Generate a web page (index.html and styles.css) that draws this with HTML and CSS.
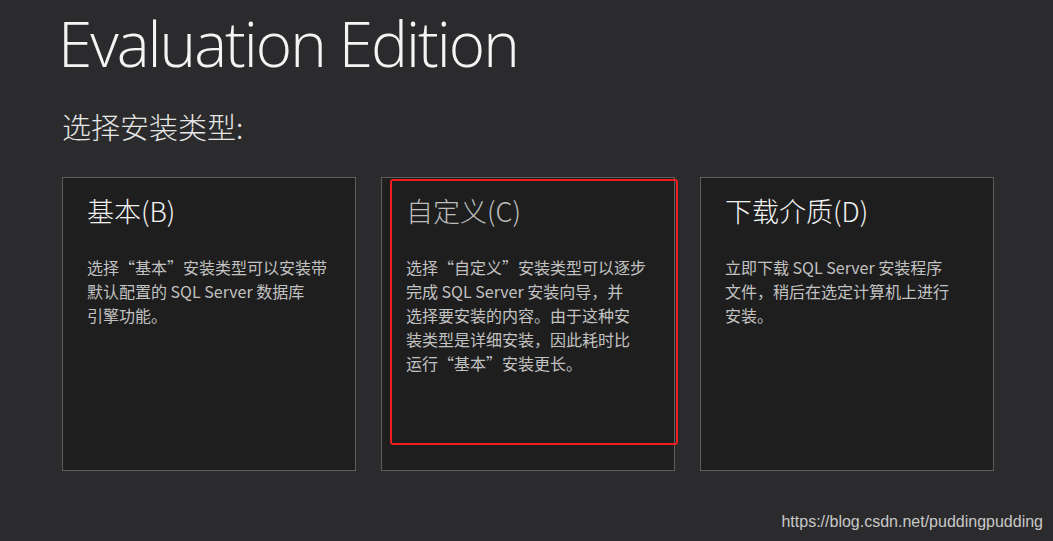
FILE: index.html
```html
<!DOCTYPE html>
<html lang="zh-CN">
<head>
    <meta charset="UTF-8">
    <meta name="viewport" content="width=device-width, initial-scale=1.0">
    <title>Evaluation Edition</title>
    <link rel="stylesheet" href="styles.css">
</head>
<body>
    <main class="page">
        <h1 class="edition">Evaluation Edition</h1>
        <h2 class="prompt">选择安装类型:</h2>

        <div class="cards">
            <div class="card">
                <h3 class="card-title">基本(B)</h3>
                <p class="card-text">选择“基本”安装类型可以安装带<br>默认配置的 SQL Server 数据库<br>引擎功能。</p>
            </div>
            <div class="card card-selected">
                <h3 class="card-title dim">自定义(C)</h3>
                <p class="card-text">选择“自定义”安装类型可以逐步<br>完成 SQL Server 安装向导，并<br>选择要安装的内容。由于这种安<br>装类型是详细安装，因此耗时比<br>运行“基本”安装更长。</p>
                <div class="mark"></div>
            </div>
            <div class="card">
                <h3 class="card-title">下载介质(D)</h3>
                <p class="card-text">立即下载 SQL Server 安装程序<br>文件，稍后在选定计算机上进行<br>安装。</p>
            </div>
        </div>
    </main>
    <div class="watermark">https://blog.csdn.net/puddingpudding</div>
</body>
</html>
```

FILE: styles.css
```css
html, body {
    margin: 0;
    height: 100%;
}

body {
    background-color: #2b2b2d;
    color: #f2f2f2;
    font-family: "Open Sans", "Noto Sans CJK SC", sans-serif;
    overflow: hidden;
    position: relative;
}

.page {
    padding: 0 0 0 60px;
}

.edition {
    margin: 0 0 0 -2px;
    padding-top: 3px;
    font-size: 62px;
    font-weight: 300;
    line-height: 80px;
    letter-spacing: -2px;
    color: #f4f4f4;
}

.prompt {
    margin: 25px 0 0 2px;
    font-family: "Noto Sans CJK SC", sans-serif;
    font-size: 29px;
    font-weight: 300;
    line-height: 36px;
    color: #e6e6e6;
}

.cards {
    display: flex;
    gap: 25px;
    margin: 33px 0 0 2px;
}

.card {
    position: relative;
    box-sizing: border-box;
    width: 294px;
    height: 294px;
    background: #1e1e1e;
    border: 1px solid #5e5e5e;
    padding: 14px 16px 0 24px;
}

.card-title {
    margin: 0;
    font-family: "Noto Sans CJK SC", sans-serif;
    font-size: 27px;
    font-weight: 300;
    line-height: 38px;
    color: #f2f2f2;
}

.card-title.dim {
    color: #bdbdbd;
}

.card-text {
    margin: 25px 0 0 0;
    font-family: "Noto Sans CJK SC", sans-serif;
    font-size: 16px;
    line-height: 24px;
    color: #c2c2c2;
    white-space: nowrap;
}

/* red annotation box drawn over the middle card */
.mark {
    position: absolute;
    left: 8px;
    top: 1px;
    width: 284px;
    height: 262px;
    border: 2px solid #f01e1e;
    border-radius: 3px;
}

.watermark {
    position: absolute;
    right: 10px;
    bottom: 10px;
    font-family: "Liberation Sans", Arial, sans-serif;
    font-size: 16px;
    color: #c8c8c8;
}
```
